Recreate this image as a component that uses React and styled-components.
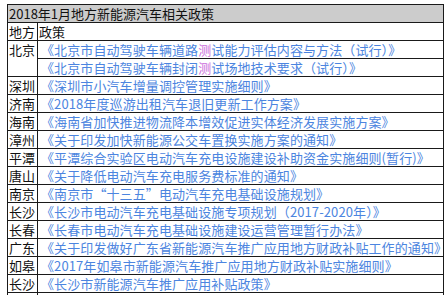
import styled, { createGlobalStyle } from 'styled-components';

const Global = createGlobalStyle`
  body {
    margin: 0;
    background: #fff;
    font-family: "Noto Sans CJK SC", "Microsoft YaHei", sans-serif;
  }
`;

const Page = styled.div`
  padding: 4px 0 0 7px;
`;

const Table = styled.table`
  width: 437px;
  table-layout: fixed;
  border-collapse: collapse;
  font-size: 13px;
  line-height: 17px;
  color: #111;
`;

const Cell = styled.td`
  border: 1px solid #1a1a1a;
  padding: 0 1px;
  height: 17px;
  white-space: nowrap;
  vertical-align: middle;
`;

const TitleCell = styled(Cell)`
  background: #cccccc;
`;

const RegionCell = styled(Cell)`
  vertical-align: ${(p) => (p.rowSpan > 1 ? 'top' : 'middle')};
`;

const PolicyCell = styled(Cell)`
  padding-left: 3px;
  letter-spacing: 0.1px;
`;

const Link = styled.span`
  color: #4c85e0;
`;

const Hit = styled.span`
  color: #cb6fdb;
`;

const rows = [
  ['深圳', '《深圳市小汽车增量调控管理实施细则》'],
  ['济南', '《2018年度巡游出租汽车退旧更新工作方案》'],
  ['海南', '《海南省加快推进物流降本增效促进实体经济发展实施方案》'],
  ['漳州', '《关于印发加快新能源公交车置换实施方案的通知》'],
  ['平潭', '《平潭综合实验区电动汽车充电设施建设补助资金实施细则(暂行)》'],
  ['唐山', '《关于降低电动汽车充电服务费标准的通知》'],
  ['南京', '《南京市“十三五”电动汽车充电基础设施规划》'],
  ['长沙', '《长沙市电动汽车充电基础设施专项规划（2017-2020年）》'],
  ['长春', '《长春市电动汽车充电基础设施建设运营管理暂行办法》'],
  ['广东', '《关于印发做好广东省新能源汽车推广应用地方财政补贴工作的通知》'],
  ['如皋', '《2017年如皋市新能源汽车推广应用地方财政补贴实施细则》'],
  ['长沙', '《长沙市新能源汽车推广应用补贴政策》'],
];

export default function App() {
  return (
    <Page>
      <Global />
      <Table>
        <colgroup>
          <col style={{ width: 30 }} />
          <col />
        </colgroup>
        <tbody>
          <tr>
            <TitleCell colSpan={2}>2018年1月地方新能源汽车相关政策</TitleCell>
          </tr>
          <tr>
            <RegionCell>地方</RegionCell>
            <Cell>政策</Cell>
          </tr>
          <tr>
            <RegionCell rowSpan={2}>北京</RegionCell>
            <PolicyCell>
              <Link>《北京市自动驾驶车辆道路<Hit>测</Hit>试能力评估内容与方法（试行）》</Link>
            </PolicyCell>
          </tr>
          <tr>
            <PolicyCell>
              <Link>《北京市自动驾驶车辆封闭<Hit>测</Hit>试场地技术要求（试行）》</Link>
            </PolicyCell>
          </tr>
          {rows.map(([region, policy], i) => (
            <tr key={i}>
              <RegionCell>{region}</RegionCell>
              <PolicyCell>
                <Link>{policy}</Link>
              </PolicyCell>
            </tr>
          ))}
          <tr>
            <RegionCell />
            <PolicyCell />
          </tr>
        </tbody>
      </Table>
    </Page>
  );
}
